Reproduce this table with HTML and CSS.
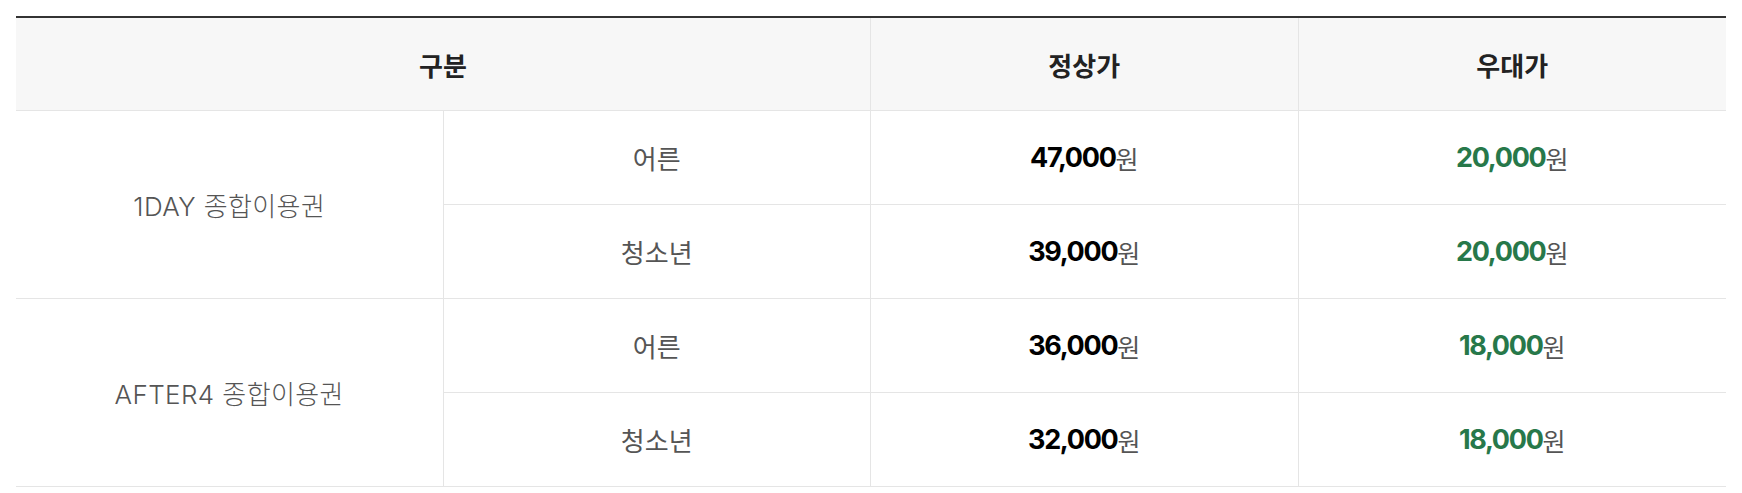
FILE: index.html
```html
<!DOCTYPE html>
<html lang="ko">
<head>
<meta charset="utf-8">
<title>요금 안내</title>
<link rel="stylesheet" href="styles.css">
</head>
<body>
<div class="wrap">
  <div class="price-table">
    <div class="cell head span2">구분</div>
    <div class="cell head">정상가</div>
    <div class="cell head last">우대가</div>

    <div class="cell name rows2">1DAY 종합이용권</div>
    <div class="cell type">어른</div>
    <div class="cell price"><span class="num">47,000</span><span class="won">원</span></div>
    <div class="cell price last"><span class="num green">20,000</span><span class="won">원</span></div>
    <div class="cell type">청소년</div>
    <div class="cell price"><span class="num">39,000</span><span class="won">원</span></div>
    <div class="cell price last"><span class="num green">20,000</span><span class="won">원</span></div>

    <div class="cell name rows2">AFTER4 종합이용권</div>
    <div class="cell type">어른</div>
    <div class="cell price"><span class="num">36,000</span><span class="won">원</span></div>
    <div class="cell price last"><span class="num green">18,000</span><span class="won">원</span></div>
    <div class="cell type">청소년</div>
    <div class="cell price"><span class="num">32,000</span><span class="won">원</span></div>
    <div class="cell price last"><span class="num green">18,000</span><span class="won">원</span></div>
  </div>
</div>
</body>
</html>
```
FILE: styles.css
```css
html, body {
  margin: 0;
  padding: 0;
  background: #fff;
}
.wrap {
  padding: 16px;
}
.price-table {
  display: grid;
  grid-template-columns: repeat(4, 1fr);
  grid-template-rows: 93px repeat(4, 94px);
  border-top: 2px solid #333;
  font-family: "Inter", "Noto Sans CJK KR", sans-serif;
}
.cell {
  box-sizing: border-box;
  display: flex;
  align-items: center;
  justify-content: center;
  border-right: 1px solid #e5e5e5;
  border-bottom: 1px solid #e5e5e5;
  color: #555;
  font-size: 25px;
}
.cell.last {
  border-right: none;
}
.head {
  background: #f7f7f7;
  font-family: "Noto Sans CJK KR", sans-serif;
  font-weight: 700;
  font-size: 26px;
  color: #222;
}
.span2 {
  grid-column: span 2;
}
.rows2 {
  grid-row: span 2;
}
.name {
  font-weight: 300;
  font-size: 26px;
  color: #555;
  letter-spacing: 0.4px;
}
.type {
  font-family: "Noto Sans CJK KR", sans-serif;
  font-size: 26px;
  color: #555;
}
.num {
  font-family: "Inter", sans-serif;
  font-weight: 700;
  font-size: 27px;
  color: #000;
  letter-spacing: -1.3px;
}
.num.green {
  color: #27784a;
}
.won {
  font-family: "Noto Sans CJK KR", sans-serif;
  font-size: 25px;
  color: #555;
}
```
